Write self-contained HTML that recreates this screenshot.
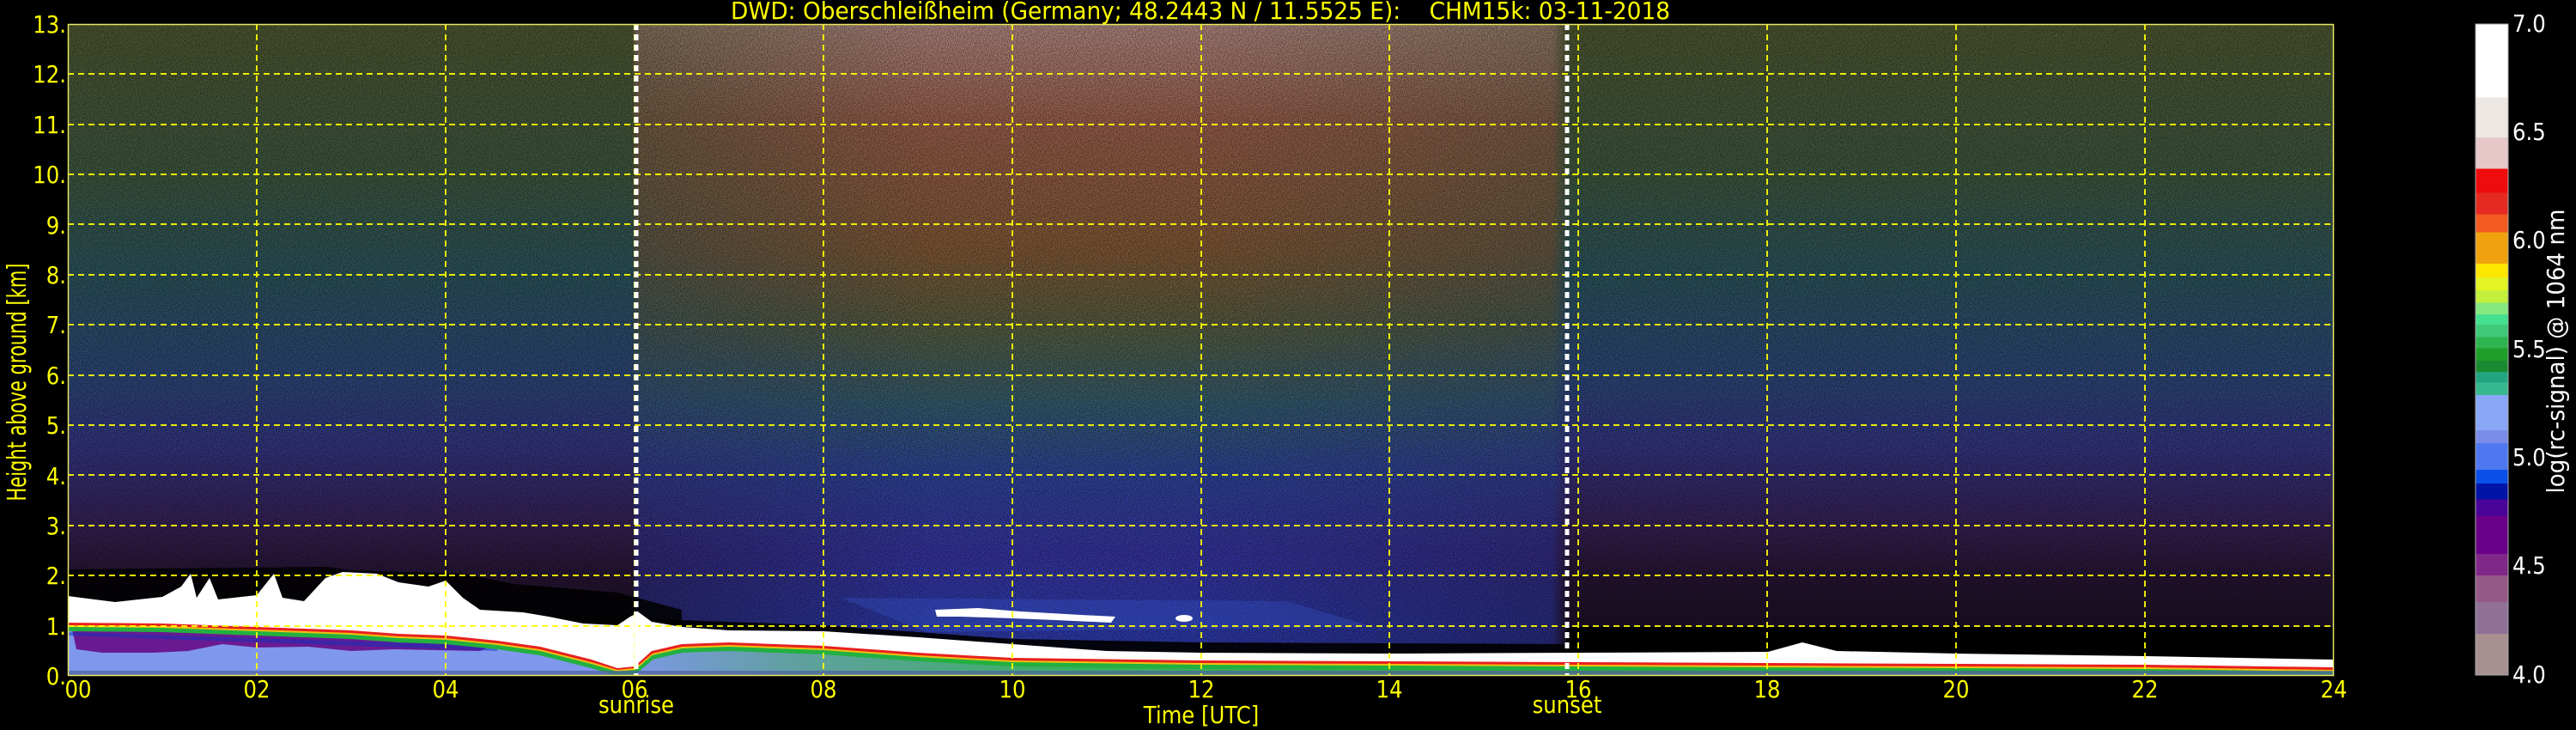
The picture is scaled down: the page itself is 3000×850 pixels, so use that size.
<!DOCTYPE html>
<html><head><meta charset="utf-8"><style>
html,body{margin:0;padding:0;background:#000;width:3000px;height:850px;overflow:hidden}
svg{display:block}
text{font-family:"DejaVu Sans","Liberation Sans",sans-serif}
</style></head><body>
<svg width="3000" height="850" viewBox="0 0 3000 850" xmlns="http://www.w3.org/2000/svg">
<defs>
<linearGradient id="side" x1="0" y1="0" x2="0" y2="759" gradientUnits="userSpaceOnUse">
<stop offset="0" stop-color="#4a532e"/><stop offset="0.23" stop-color="#3b533c"/>
<stop offset="0.38" stop-color="#2a5058"/><stop offset="0.54" stop-color="#2a4472"/>
<stop offset="0.65" stop-color="#32327c"/><stop offset="0.77" stop-color="#331f50"/>
<stop offset="0.85" stop-color="#241430"/><stop offset="1" stop-color="#160b1a"/>
</linearGradient>
<linearGradient id="mid" x1="0" y1="0" x2="0" y2="759" gradientUnits="userSpaceOnUse">
<stop offset="0" stop-color="#a8827a"/><stop offset="0.15" stop-color="#925a48"/>
<stop offset="0.35" stop-color="#7a5434"/><stop offset="0.46" stop-color="#54583c"/>
<stop offset="0.58" stop-color="#325868"/><stop offset="0.69" stop-color="#2c4292"/>
<stop offset="0.81" stop-color="#34329a"/><stop offset="0.92" stop-color="#2c38a4"/>
<stop offset="1" stop-color="#2c38a4"/>
</linearGradient>
<linearGradient id="hm" x1="0" y1="0" x2="2639" y2="0" gradientUnits="userSpaceOnUse">
<stop offset="0.249" stop-color="#000"/><stop offset="0.251" stop-color="#888"/>
<stop offset="0.38" stop-color="#fff"/><stop offset="0.5" stop-color="#fff"/>
<stop offset="0.655" stop-color="#aaa"/><stop offset="0.662" stop-color="#000"/>
</linearGradient>
<mask id="mm"><rect x="0" y="0" width="2639" height="759" fill="url(#hm)"/></mask>
<linearGradient id="gnd" x1="0" y1="0" x2="2639" y2="0" gradientUnits="userSpaceOnUse">
<stop offset="0" stop-color="#8097ee"/><stop offset="0.24" stop-color="#8097ee"/>
<stop offset="0.32" stop-color="#60a0a0"/><stop offset="0.45" stop-color="#38b060"/>
<stop offset="0.7" stop-color="#40a048"/><stop offset="1" stop-color="#4a90a0"/>
</linearGradient>
<filter id="nz" x="0" y="0" width="100%" height="100%">
<feTurbulence type="fractalNoise" baseFrequency="0.9" numOctaves="1" seed="3"/>
<feColorMatrix type="matrix" values="0 0 0 0 0  0 0 0 0 0  0 0 0 0 0  4 0 0 0 -1.6"/>
</filter>
<linearGradient id="cb" x1="0" y1="0" x2="0" y2="1">
<stop offset="0" stop-color="#fff"/><stop offset="0.113" stop-color="#fff"/>
<stop offset="0.113" stop-color="#ede8e3"/><stop offset="0.174" stop-color="#ede8e3"/>
<stop offset="0.174" stop-color="#e6c8c8"/><stop offset="0.222" stop-color="#e6c8c8"/>
<stop offset="0.222" stop-color="#ef0c0c"/><stop offset="0.259" stop-color="#ef0c0c"/>
<stop offset="0.259" stop-color="#e52a22"/><stop offset="0.292" stop-color="#e52a22"/>
<stop offset="0.292" stop-color="#f25a1f"/><stop offset="0.320" stop-color="#f25a1f"/>
<stop offset="0.320" stop-color="#f0a20e"/><stop offset="0.368" stop-color="#f0a20e"/>
<stop offset="0.368" stop-color="#fde600"/><stop offset="0.389" stop-color="#fde600"/>
<stop offset="0.389" stop-color="#e4f423"/><stop offset="0.409" stop-color="#e4f423"/>
<stop offset="0.409" stop-color="#c3ee3c"/><stop offset="0.428" stop-color="#c3ee3c"/>
<stop offset="0.428" stop-color="#85e880"/><stop offset="0.446" stop-color="#85e880"/>
<stop offset="0.446" stop-color="#45df90"/><stop offset="0.462" stop-color="#45df90"/>
<stop offset="0.462" stop-color="#3ec877"/><stop offset="0.481" stop-color="#3ec877"/>
<stop offset="0.481" stop-color="#2fb550"/><stop offset="0.498" stop-color="#2fb550"/>
<stop offset="0.498" stop-color="#1e9f2a"/><stop offset="0.517" stop-color="#1e9f2a"/>
<stop offset="0.517" stop-color="#198a30"/><stop offset="0.534" stop-color="#198a30"/>
<stop offset="0.534" stop-color="#22a480"/><stop offset="0.551" stop-color="#22a480"/>
<stop offset="0.551" stop-color="#38b890"/><stop offset="0.570" stop-color="#38b890"/>
<stop offset="0.570" stop-color="#8aa6f7"/><stop offset="0.624" stop-color="#8aa6f7"/>
<stop offset="0.624" stop-color="#7b8ce8"/><stop offset="0.644" stop-color="#7b8ce8"/>
<stop offset="0.644" stop-color="#4f78f0"/><stop offset="0.685" stop-color="#4f78f0"/>
<stop offset="0.685" stop-color="#0a50e8"/><stop offset="0.706" stop-color="#0a50e8"/>
<stop offset="0.706" stop-color="#0014a8"/><stop offset="0.730" stop-color="#0014a8"/>
<stop offset="0.730" stop-color="#4a0598"/><stop offset="0.755" stop-color="#4a0598"/>
<stop offset="0.755" stop-color="#6a0088"/><stop offset="0.814" stop-color="#6a0088"/>
<stop offset="0.814" stop-color="#802888"/><stop offset="0.847" stop-color="#802888"/>
<stop offset="0.847" stop-color="#955888"/><stop offset="0.888" stop-color="#955888"/>
<stop offset="0.888" stop-color="#917098"/><stop offset="0.937" stop-color="#917098"/>
<stop offset="0.937" stop-color="#a89090"/><stop offset="1" stop-color="#a89090"/>
</linearGradient>
</defs>

<g fill="#ffff00" font-size="28" text-anchor="end">
<text transform="translate(77,38) scale(0.87,1)">13.</text>
<text transform="translate(77,96) scale(0.87,1)">12.</text>
<text transform="translate(77,155) scale(0.87,1)">11.</text>
<text transform="translate(77,213) scale(0.87,1)">10.</text>
<text transform="translate(77,272) scale(0.87,1)">9.</text>
<text transform="translate(77,330) scale(0.87,1)">8.</text>
<text transform="translate(77,388) scale(0.87,1)">7.</text>
<text transform="translate(77,447) scale(0.87,1)">6.</text>
<text transform="translate(77,505) scale(0.87,1)">5.</text>
<text transform="translate(77,564) scale(0.87,1)">4.</text>
<text transform="translate(77,622) scale(0.87,1)">3.</text>
<text transform="translate(77,680) scale(0.87,1)">2.</text>
<text transform="translate(77,739) scale(0.87,1)">1.</text>
<text transform="translate(77,797) scale(0.87,1)">0.</text>
</g>

<g transform="translate(79,28)">
<rect x="0" y="0" width="2639" height="759" fill="url(#side)"/>
<rect x="0" y="0" width="2639" height="759" fill="url(#mid)" mask="url(#mm)"/>
<rect x="0" y="0" width="2639" height="759" filter="url(#nz)" opacity="0.4"/>
<path d="M0,635 L300,632 L330,636 L460,640 L520,652 L640,662 L715,682 L715,759 L0,759 Z" fill="#000" opacity="0.85"/>
<path d="M900,668 L1420,672 L1520,702 L1000,708 Z" fill="#3858d0" opacity="0.3"/>
<path d="M660,692 L880,700 L990,708 L1100,716 L1320,720 L1760,722 L1760,759 L660,759 Z" fill="#000" opacity="0.9"/>
<path d="M1745,702 L2639,702 L2639,759 L1745,759 Z" fill="#000"/>
<path d="M0,697 L110,698 L220,702 L330,706 L385,710 L440,712 L500,718 L550,725 L610,740 L640,750 L660,748 L680,730 L715,722 L770,720 L880,724 L990,732 L1100,738 L1320,741 L1760,743 L2200,745 L2420,746 L2639,749 L2639,759 L0,759 Z" fill="url(#gnd)"/>
<path d="M5,705 C60,700 120,705 170,704 L220,706 L270,706 L330,710 L380,712 L430,716 L500,722 L480,730 L380,728 L330,730 L280,725 L220,726 L180,722 L140,730 L100,732 L40,732 L10,728 Z" fill="#6a1a90"/>
<path d="M0,708 L500,724 L500,730 L0,712 Z" fill="#1030c0" opacity="0.5"/>
<polyline points="0,703 110,704 220,708 330,712 385,716 440,718 500,724 550,731 610,746 640,755 660,753 680,736 715,728 770,726 880,730 990,738 1100,744 1320,747 1760,749 2200,751 2420,752 2639,755" fill="none" stroke="#22b040" stroke-width="8"/>
<polyline points="0,700 110,701 220,705 330,709 385,713 440,715 500,721 550,728 610,743 640,752 660,750 680,733 715,725 770,723 880,727 990,735 1100,741 1320,744 1760,746 2200,748 2420,749 2639,752" fill="none" stroke="#f0c010" stroke-width="4"/>
<polyline points="0,698 110,699 220,703 330,707 385,711 440,713 500,719 550,726 610,741 640,750 660,748 680,731 715,723 770,721 880,725 990,733 1100,739 1320,742 1760,744 2200,746 2420,747 2639,750" fill="none" stroke="#e82020" stroke-width="4"/>
<path d="M0,666 L55,673 L110,667 L132,655 L143,640 L150,668 L165,645 L175,670 L220,665 L240,640 L250,668 L275,672 L300,645 L320,638 L360,640 L385,650 L420,655 L440,648 L460,668 L480,682 L530,685 L560,690 L600,698 L640,700 L655,690 L665,685 L680,696 L715,702 L770,706 L880,707 L990,714 L1100,722 L1210,730 L1320,732 L1540,733 L1760,732 L1980,731 L2020,720 L2060,730 L2200,733 L2420,736 L2639,740 L2639,749 L2420,746 L2200,745 L1760,743 L1320,741 L1100,738 L990,732 L880,724 L770,720 L715,722 L680,730 L660,748 L640,750 L610,740 L550,725 L500,718 L440,712 L385,710 L330,706 L220,702 L110,698 L0,697 Z" fill="#fff"/>
<path d="M1010,682 L1060,680 L1110,684 L1180,688 L1220,690 L1215,697 L1150,694 L1100,692 L1040,690 L1012,690 Z" fill="#fff"/>
<ellipse cx="1300" cy="692" rx="10" ry="4" fill="#fff"/>
<rect x="0" y="753" width="2639" height="6" fill="#5060a0" opacity="0.7"/>
<g stroke="#ffff00" stroke-width="2" stroke-dasharray="7,5" opacity="0.9">
<line x1="0" y1="701" x2="2639" y2="701"/><line x1="0" y1="642" x2="2639" y2="642"/>
<line x1="0" y1="584" x2="2639" y2="584"/><line x1="0" y1="525" x2="2639" y2="525"/>
<line x1="0" y1="467" x2="2639" y2="467"/><line x1="0" y1="409" x2="2639" y2="409"/>
<line x1="0" y1="350" x2="2639" y2="350"/><line x1="0" y1="292" x2="2639" y2="292"/>
<line x1="0" y1="233" x2="2639" y2="233"/><line x1="0" y1="175" x2="2639" y2="175"/>
<line x1="0" y1="117" x2="2639" y2="117"/><line x1="0" y1="58" x2="2639" y2="58"/>
<line x1="220" y1="0" x2="220" y2="759"/><line x1="440" y1="0" x2="440" y2="759"/>
<line x1="660" y1="0" x2="660" y2="759"/><line x1="880" y1="0" x2="880" y2="759"/>
<line x1="1100" y1="0" x2="1100" y2="759"/><line x1="1320" y1="0" x2="1320" y2="759"/>
<line x1="1539" y1="0" x2="1539" y2="759"/><line x1="1759" y1="0" x2="1759" y2="759"/>
<line x1="1979" y1="0" x2="1979" y2="759"/><line x1="2199" y1="0" x2="2199" y2="759"/>
<line x1="2419" y1="0" x2="2419" y2="759"/>
</g>
<g stroke="#fff" stroke-width="5" stroke-dasharray="7,5">
<line x1="662" y1="0" x2="662" y2="759"/><line x1="1746" y1="0" x2="1746" y2="759"/>
</g>
<rect x="0.5" y="0.5" width="2638" height="758" fill="none" stroke="#e8e860" stroke-width="1.5"/>
</g>

<g fill="#ffff00" font-size="28" text-anchor="middle">
<text transform="translate(91,812) scale(0.87,1)">00</text>
<text transform="translate(299,812) scale(0.87,1)">02</text>
<text transform="translate(519,812) scale(0.87,1)">04</text>
<text transform="translate(739,812) scale(0.87,1)">06</text>
<text transform="translate(959,812) scale(0.87,1)">08</text>
<text transform="translate(1179,812) scale(0.87,1)">10</text>
<text transform="translate(1399,812) scale(0.87,1)">12</text>
<text transform="translate(1618,812) scale(0.87,1)">14</text>
<text transform="translate(1838,812) scale(0.87,1)">16</text>
<text transform="translate(2058,812) scale(0.87,1)">18</text>
<text transform="translate(2278,812) scale(0.87,1)">20</text>
<text transform="translate(2498,812) scale(0.87,1)">22</text>
<text transform="translate(2718,812) scale(0.87,1)">24</text>
<text transform="translate(741,830) scale(0.87,1)">sunrise</text>
<text transform="translate(1825,830) scale(0.87,1)">sunset</text>
<text transform="translate(1399,842) scale(0.87,1)">Time [UTC]</text>
</g>
<text x="1398" y="22" fill="#ffff00" font-size="28" text-anchor="middle" textLength="1094" lengthAdjust="spacingAndGlyphs">DWD: Oberschleißheim (Germany; 48.2443 N / 11.5525 E):&#160;&#160;&#160;&#160;CHM15k: 03-11-2018</text>
<text transform="translate(30,445) rotate(-90)" fill="#ffff00" font-size="30" text-anchor="middle" textLength="277" lengthAdjust="spacingAndGlyphs">Height above ground [km]</text>

<rect x="2883" y="28" width="38" height="758" fill="url(#cb)" stroke="#aaa" stroke-width="1"/>
<g fill="#fff" font-size="28">
<text transform="translate(2926,37) scale(0.87,1)">7.0</text>
<text transform="translate(2926,163) scale(0.87,1)">6.5</text>
<text transform="translate(2926,289) scale(0.87,1)">6.0</text>
<text transform="translate(2926,416) scale(0.87,1)">5.5</text>
<text transform="translate(2926,542) scale(0.87,1)">5.0</text>
<text transform="translate(2926,668) scale(0.87,1)">4.5</text>
<text transform="translate(2926,795) scale(0.87,1)">4.0</text>
</g>
<text transform="translate(2986,409) rotate(-90)" fill="#fff" font-size="28" text-anchor="middle" textLength="331" lengthAdjust="spacingAndGlyphs">log(rc-signal) @ 1064 nm</text>
</svg>
</body></html>
